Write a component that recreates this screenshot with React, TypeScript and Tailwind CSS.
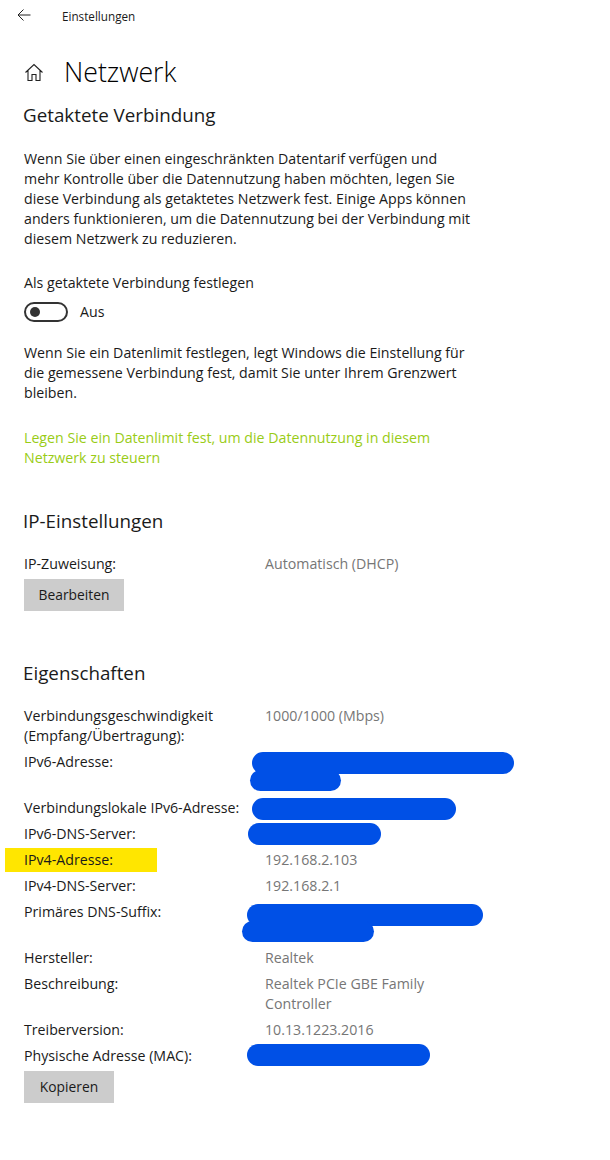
import React from 'react';

const FONT = "font-['Open_Sans',sans-serif]";

const Row = ({ label, children, className = '' }: { label: React.ReactNode; children?: React.ReactNode; className?: string }) => (
  <div className={`relative flex leading-5 ${className}`}>
    <div className="w-[241px] shrink-0 text-[#1a1a1a]">{label}</div>
    <div className="text-[#767676]">{children}</div>
  </div>
);

const Blob = ({ className }: { className: string }) => (
  <div className={`absolute rounded-full bg-[#0050e6] ${className}`} />
);

const GrayButton = ({ children, className = '' }: { children: React.ReactNode; className?: string }) => (
  <button className={`h-8 bg-[#cccccc] pt-px text-[13.8px] text-[#1a1a1a] ${className}`}>{children}</button>
);

export default function App() {
  return (
    <div className={`relative min-h-[1160px] w-[610px] overflow-hidden bg-white text-[14.2px] ${FONT}`}>
      {/* title bar */}
      <div className="flex h-[34px] items-center pl-[17px]">
        <svg width="14" height="14" viewBox="0 0 14 14" fill="none" stroke="#222" strokeWidth="1" className="-mt-[4px]">
          <path d="M13.5 7H1M6.5 1.5 1 7l5.5 5.5" />
        </svg>
        <span className="ml-[31px] text-[11.7px] text-[#1a1a1a]">Einstellungen</span>
      </div>

      {/* page heading */}
      <div className="mt-[18px] flex h-[40px] items-center pl-[25px]">
        <svg width="18" height="18" viewBox="0 0 18 18" fill="none" stroke="#222" strokeWidth="1.1">
          <path d="M.5 9.5 9 1.5l8.5 8M3 7.5v10h4v-6h4v6h4v-10" />
        </svg>
        <h1 className="ml-[21px] text-[26.7px] font-light leading-[40px] text-black">Netzwerk</h1>
      </div>

      <div className="pl-[24px]">
        <h2 className="-ml-px mt-[8px] text-[18.8px] leading-[30px] text-[#1a1a1a]">Getaktete Verbindung</h2>

        <p className="mt-[19px] leading-5 text-[#1a1a1a]">
          Wenn Sie über einen eingeschränkten Datentarif verfügen und
          <br />
          mehr Kontrolle über die Datennutzung haben möchten, legen Sie
          <br />
          diese Verbindung als getaktetes Netzwerk fest. Einige Apps können
          <br />
          anders funktionieren, um die Datennutzung bei der Verbindung mit
          <br />
          diesem Netzwerk zu reduzieren.
        </p>

        <p className="mt-[24px] leading-5 text-[#1a1a1a]">Als getaktete Verbindung festlegen</p>

        <div className="mt-[9px] flex h-5 items-center">
          <div className="flex h-5 w-11 items-center rounded-full border-2 border-[#333333] pl-[4px]">
            <div className="h-[10px] w-[10px] rounded-full bg-[#333333]" />
          </div>
          <span className="ml-3 text-[#1a1a1a]">Aus</span>
        </div>

        <p className="mt-[21px] leading-5 text-[#1a1a1a]">
          Wenn Sie ein Datenlimit festlegen, legt Windows die Einstellung für
          <br />
          die gemessene Verbindung fest, damit Sie unter Ihrem Grenzwert
          <br />
          bleiben.
        </p>

        <p className="mt-[25px] leading-5 text-[#99cc16]">
          Legen Sie ein Datenlimit fest, um die Datennutzung in diesem
          <br />
          Netzwerk zu steuern
        </p>

        <h2 className="-ml-px mt-[38px] text-[18.8px] leading-[30px] text-[#1a1a1a]">IP-Einstellungen</h2>

        <Row label="IP-Zuweisung:" className="mt-[18px]">
          Automatisch (DHCP)
        </Row>
        <GrayButton className="mt-[5px] w-[100px]">Bearbeiten</GrayButton>

        <h2 className="-ml-px mt-[47px] text-[18.8px] leading-[30px] text-[#1a1a1a]">Eigenschaften</h2>

        <div className="mt-[18px] flex flex-col gap-[6px]">
          <Row
            label={
              <>
                Verbindungsgeschwindigkeit
                <br />
                (Empfang/Übertragung):
              </>
            }
          >
            1000/1000 (Mbps)
          </Row>
          <Row label="IPv6-Adresse:" className="h-10">
            <Blob className="left-[228px] top-0 h-[22px] w-[262px]" />
            <Blob className="left-[226px] top-[18px] h-[21px] w-[91px]" />
          </Row>
          <Row label="Verbindungslokale IPv6-Adresse:">
            <Blob className="left-[228px] top-0 h-[22px] w-[204px]" />
          </Row>
          <Row label="IPv6-DNS-Server:">
            <Blob className="left-[224px] -top-[1px] h-[22px] w-[133px]" />
          </Row>
          <Row
            label={
              <>
                <span className="absolute -left-[19px] -top-[2px] h-6 w-[152px] bg-[#ffe600]" />
                <span className="relative">IPv4-Adresse:</span>
              </>
            }
          >
            192.168.2.103
          </Row>
          <Row label="IPv4-DNS-Server:">192.168.2.1</Row>
          <Row label="Primäres DNS-Suffix:" className="h-10">
            <Blob className="left-[223px] top-[2px] h-[22px] w-[236px]" />
            <Blob className="left-[218px] top-[19px] h-[21px] w-[132px]" />
          </Row>
          <Row label="Hersteller:">Realtek</Row>
          <Row label="Beschreibung:">
            Realtek PCIe GBE Family
            <br />
            Controller
          </Row>
          <Row label="Treiberversion:">10.13.1223.2016</Row>
          <Row label="Physische Adresse (MAC):">
            <span className="invisible">00-00-00-00-00-00</span>
            <Blob className="left-[223px] -top-[2px] h-[22px] w-[183px]" />
          </Row>
        </div>

        <GrayButton className="mt-[5px] w-[90px]">Kopieren</GrayButton>
      </div>
    </div>
  );
}
